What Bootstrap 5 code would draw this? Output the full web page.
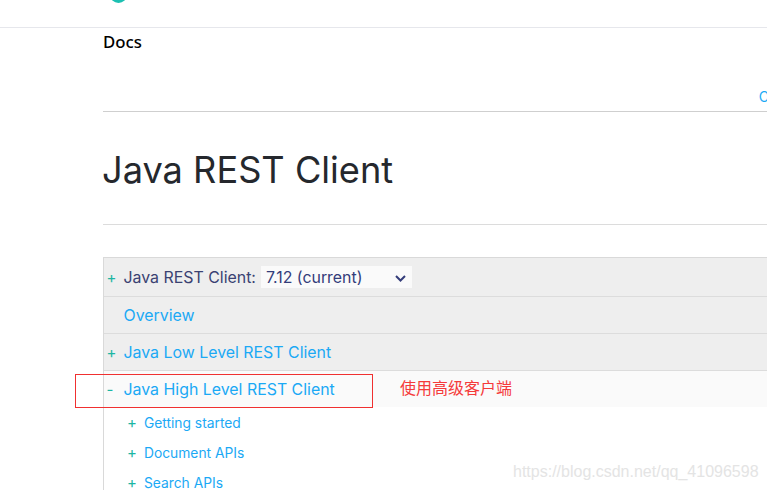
<!DOCTYPE html>
<html lang="zh">
<head>
<meta charset="utf-8">
<title>Java REST Client</title>
<link href="https://cdn.jsdelivr.net/npm/bootstrap@5.3.0/dist/css/bootstrap.min.css" rel="stylesheet">
<style>
html,body{height:490px;overflow:hidden;background:#fff}
body{font-family:Inter,"Noto Sans CJK SC",sans-serif;position:relative}
.topbar{height:28px;border-bottom:1px solid #e6e7ec;padding-left:110px}
.logo-dot{width:17px;height:17px;border-radius:50%;background:#1cc0b2;margin-top:-14px}
.page-wrap{padding-left:103px}
.crumb{font-family:"Noto Sans",sans-serif;font-size:16.800px;font-weight:500;color:#000;line-height:22px;padding-top:3px;height:84px;border-bottom:1px solid #cfcfcf}
.edit-row{height:0;text-align:right;color:#1ba9f5;font-size:14px;line-height:17px;position:relative;top:-24px;right:-2px}
.edit-link{color:inherit;text-decoration:none}
.title-h{font-size:36.200px;font-weight:400;color:#25282d;line-height:44px;margin:0;padding-top:36px;height:113px;border-bottom:1px solid #dcdcdc;text-indent:-1px}
.toc{margin-top:32px;border-left:1px solid #d9d9d9;border-top:1px solid #d9d9d9;font-size:15.900px;line-height:20px}
.toc-row{display:flex;align-items:center;background:#eee;border-bottom:1px solid #dcdcdc;height:37px;padding-left:2.500px;padding-top:2px}
.toc-row.first{height:39px}
.toc-row.active{background:#fafafa;border-bottom:0;height:36px}
.pm{width:17px;color:#1cb6a3;font-size:15px;text-align:left;flex:none}
.toc a{color:#1ba9f5;text-decoration:none}
.lbl{color:#3a4272}
.ver{width:151px;height:22px;background:#fafafa;margin:-2px 0 0 5px;padding:2px 6px 0 5px;color:#343d7a}
.sub{height:30px;display:flex;align-items:center;padding-left:23px;padding-top:2px;font-size:13.800px}
.red-box{position:absolute;left:75px;top:374px;width:298px;height:34px;border:1px solid #f03030}
.note{position:absolute;left:400px;top:377px;color:#f53a3a;font-size:16px;line-height:20px;font-family:"Noto Sans CJK SC",sans-serif}
.mark-w{position:absolute;left:513px;top:462px;color:#e4e4e4;font-size:16px;line-height:19px;font-family:"Liberation Sans",sans-serif}
</style>
</head>
<body>
<div class="topbar d-flex"><div class="logo-dot"></div></div>
<div class="page-wrap">
  <div class="crumb">Docs</div>
  <div class="edit-row"><a class="edit-link" href="#">C</a></div>
  <h1 class="title-h">Java REST Client</h1>
  <div class="toc">
    <div class="toc-row first"><span class="pm">+</span><span class="lbl">Java REST Client:</span>
      <span class="ver d-flex align-items-center justify-content-between"><span>7.12 (current)</span>
        <svg width="11" height="7" viewBox="0 0 11 7"><path d="M1 1l4.500 4.500L10 1" fill="none" stroke="#343d7a" stroke-width="2"/></svg>
      </span></div>
    <div class="toc-row"><span class="pm"></span><a href="#">Overview</a></div>
    <div class="toc-row"><span class="pm">+</span><a href="#">Java Low Level REST Client</a></div>
    <div class="toc-row active"><span class="pm">-</span><a href="#">Java High Level REST Client</a></div>
    <div>
      <div class="sub"><span class="pm">+</span><a href="#">Getting started</a></div>
      <div class="sub"><span class="pm">+</span><a href="#">Document APIs</a></div>
      <div class="sub"><span class="pm">+</span><a href="#">Search APIs</a></div>
    </div>
  </div>
</div>
<div class="red-box"></div>
<div class="note">使用高级客户端</div>
<div class="mark-w">https://blog.csdn.net/qq_41096598</div>
<script src="https://cdn.jsdelivr.net/npm/bootstrap@5.3.0/dist/js/bootstrap.bundle.min.js"></script>
</body>
</html>
